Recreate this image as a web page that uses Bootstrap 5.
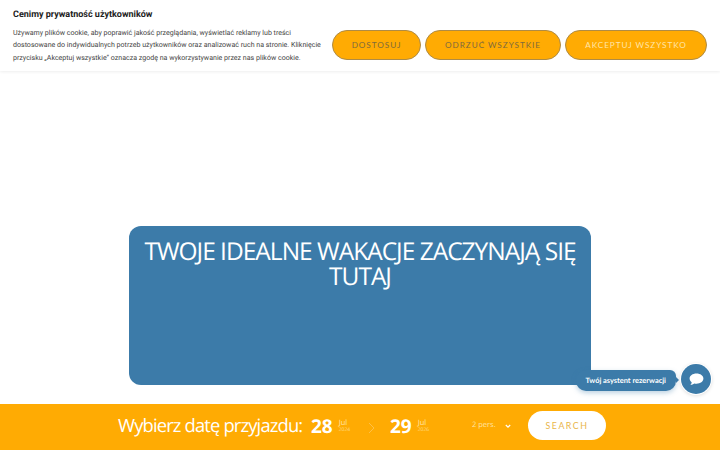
<!doctype html>
<html lang="pl">
<head>
<meta charset="utf-8">
<title>Wakacje</title>
<link href="https://cdn.jsdelivr.net/npm/bootstrap@5.3.0/dist/css/bootstrap.min.css" rel="stylesheet">
<style>
html,body{height:450px;overflow:hidden}
body{background:#fff;font-family:"Open Sans","Liberation Sans",sans-serif;text-rendering:geometricPrecision}
.page-shell{height:450px}
.cookie-bar{height:71px;background:#fff;box-shadow:0 1px 3px rgba(0,0,0,.07);padding:0 13px;font-family:Roboto,"Liberation Sans",sans-serif}
.cookie-copy{width:314px;flex:none}
.cookie-title{font-size:9px;line-height:12px;font-weight:700;color:#212121;margin:9px 0 6px}
.cookie-text{font-size:7.05px;line-height:12.3px;color:#444;margin:0;white-space:nowrap}
.cookie-actions{margin-left:5px;gap:4px;margin-top:30px}
.cookie-btn{height:30px;border-radius:15px;background:#ffab03;border:1px solid #ae8b45;font-family:Lato,sans-serif;font-size:8.2px;letter-spacing:.95px;color:#7d6a3d;padding:0;display:flex;align-items:center;justify-content:center}
.cookie-btn:hover{background:#ffab03}
.w-a{width:89px}.w-b{width:136px}.w-c{width:142px;color:#ffe5a8}
.hero-zone{flex:1;padding:155px 129px 19px}
.hero-box{height:159px;background:#3c7ba9;border-radius:12px;color:#fff;text-align:center;padding:13px 8px}
.hero-title{font-family:"Open Sans",sans-serif;font-size:24.5px;line-height:25px;font-weight:400;margin:0;letter-spacing:-1px}
.date-bar{height:46px;background:#ffab03;color:#fff;padding-left:118px;padding-bottom:2px}
.pick-label{font-family:"Open Sans",sans-serif;font-size:18.4px;font-weight:400;letter-spacing:-.85px;width:193px;white-space:nowrap}
.day-num{font-family:"Open Sans",sans-serif;font-size:19px;font-weight:700;line-height:1}
.month-wrap{font-size:7.5px;line-height:8px;margin-left:6px;color:#ffe5a8}
.month-wrap small{display:block;font-size:5px;line-height:7px;opacity:.8}
.date-a{width:57px}
.date-b{width:82px}
.arrow-slot{width:22px}
.pers{width:56px;font-size:7.5px;color:#ffe5a8;gap:9px}
.search-btn{width:78px;height:29px;border-radius:15px;background:#fff;border:0;color:#e9b54a;font-family:Lato,sans-serif;font-size:8.8px;letter-spacing:1.5px;padding:0;margin-bottom:1px}
.chat-float{position:absolute;right:9px;bottom:56px;height:30px}
.chat-label{position:relative;height:21px;background:#3c7ba9;color:#fff;font-family:Lato,sans-serif;font-size:7.4px;font-weight:700;line-height:21px;padding:0 10px;border-radius:10px 6px 10px 10px;box-shadow:0 2px 5px rgba(60,123,169,.35);margin:3px 5px 0 0}
.chat-label::after{content:"";position:absolute;right:-3px;top:7px;border-left:3px solid #3c7ba9;border-top:3px solid transparent;border-bottom:3px solid transparent}
.chat-round{width:30px;height:30px;border-radius:50%;background:#3c7ba9;box-shadow:0 0 0 1px #fff,0 1px 4px rgba(0,0,0,.2)}
</style>
</head>
<body>
<div class="page-shell d-flex flex-column position-relative">
  <div class="cookie-bar d-flex align-items-start">
    <div class="cookie-copy">
      <div class="cookie-title">Cenimy prywatność użytkowników</div>
      <p class="cookie-text">Używamy plików cookie, aby poprawić jakość przeglądania, wyświetlać reklamy lub treści<br>dostosowane do indywidualnych potrzeb użytkowników oraz analizować ruch na stronie. Kliknięcie<br>przycisku „Akceptuj wszystkie” oznacza zgodę na wykorzystywanie przez nas plików cookie.</p>
    </div>
    <div class="cookie-actions d-flex">
      <button class="btn cookie-btn w-a">DOSTOSUJ</button>
      <button class="btn cookie-btn w-b">ODRZUĆ WSZYSTKIE</button>
      <button class="btn cookie-btn w-c">AKCEPTUJ WSZYSTKO</button>
    </div>
  </div>
  <div class="hero-zone">
    <div class="hero-box"><h1 class="hero-title">TWOJE IDEALNE WAKACJE ZACZYNAJĄ SIĘ TUTAJ</h1></div>
  </div>
  <div class="date-bar d-flex align-items-center">
    <div class="pick-label">Wybierz datę przyjazdu:</div>
    <div class="date-a d-flex align-items-center"><span class="day-num">28</span><span class="month-wrap">Jul<small>2024</small></span></div>
    <div class="arrow-slot"><svg width="8" height="12" viewBox="0 0 8 12"><path d="M1 1l5 5-5 5" fill="none" stroke="#ffc046" stroke-width="1"/></svg></div>
    <div class="date-b d-flex align-items-center"><span class="day-num">29</span><span class="month-wrap">Jul<small>2026</small></span></div>
    <div class="pers d-flex align-items-center"><span>2&nbsp;pers.</span><svg width="6" height="5" viewBox="0 0 6 5"><path d="M.8 1l2.2 2.2L5.2 1" fill="none" stroke="#fff" stroke-width="1.2"/></svg></div>
    <button class="search-btn">SEARCH</button>
  </div>
  <div class="chat-float d-flex align-items-center">
    <div class="chat-label">Twój asystent rezerwacji</div>
    <div class="chat-round d-flex align-items-center justify-content-center">
      <svg width="15" height="13" viewBox="0 0 15 13"><path d="M7.5.5C3.6.5.6 2.7.6 5.6c0 1.5.8 2.8 2.1 3.7-.1 1-.6 2-1.3 2.7 1.5-.1 2.9-.7 3.9-1.5.7.2 1.4.3 2.2.3 3.9 0 6.9-2.3 6.9-5.2S11.4.5 7.5.5z" fill="#fff"/></svg>
    </div>
  </div>
</div>
</body>
</html>
